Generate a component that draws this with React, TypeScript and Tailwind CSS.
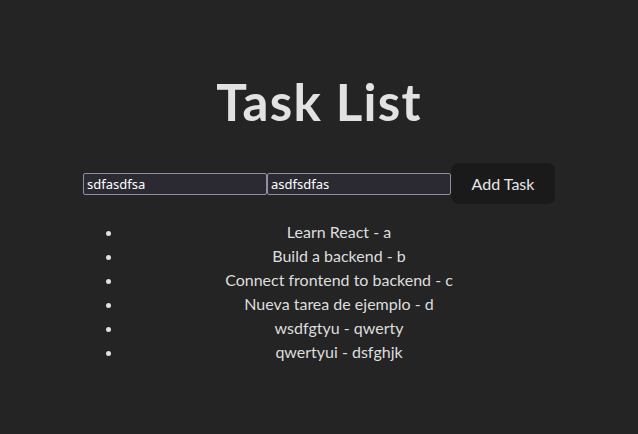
const tasks = [
  { title: 'Learn React', desc: 'a' },
  { title: 'Build a backend', desc: 'b' },
  { title: 'Connect frontend to backend', desc: 'c' },
  { title: 'Nueva tarea de ejemplo', desc: 'd' },
  { title: 'wsdfgtyu', desc: 'qwerty' },
  { title: 'qwertyui', desc: 'dsfghjk' },
];

export default function App() {
  return (
    <div className="min-h-screen bg-[#242424] text-[#dedede] font-['Lato',sans-serif] flex justify-center">
      <div className="w-[472px] pt-[73px] text-center">
        <h1 className="text-[51.2px] leading-[1.1] font-bold tracking-[1.2px] text-[#e2e2e2] mb-[34px]">Task List</h1>
        <form className="flex items-center" onSubmit={(e) => e.preventDefault()}>
          <input
            defaultValue="sdfasdfsa"
            className="w-[184px] h-[22px] border border-[#8f8f9d] rounded-[2px] bg-[#2b2a33] px-[3px] text-[13px] text-white font-['Noto_Sans',sans-serif]"
          />
          <input
            defaultValue="asdfsdfas"
            className="w-[184px] h-[22px] border border-[#8f8f9d] rounded-[2px] bg-[#2b2a33] px-[3px] text-[13px] text-white font-['Noto_Sans',sans-serif]"
          />
          <button className="w-[104px] h-[41px] rounded-lg bg-[#1a1a1a] text-[16px] font-normal text-[#e6e6e6]">
            Add Task
          </button>
        </form>
        <ul className="mt-4 pl-10 list-disc text-[16px] leading-6">
          {tasks.map((t) => (
            <li key={t.title} className="marker:text-[#e0e0e0]">
              {t.title} - {t.desc}
            </li>
          ))}
        </ul>
      </div>
    </div>
  );
}
